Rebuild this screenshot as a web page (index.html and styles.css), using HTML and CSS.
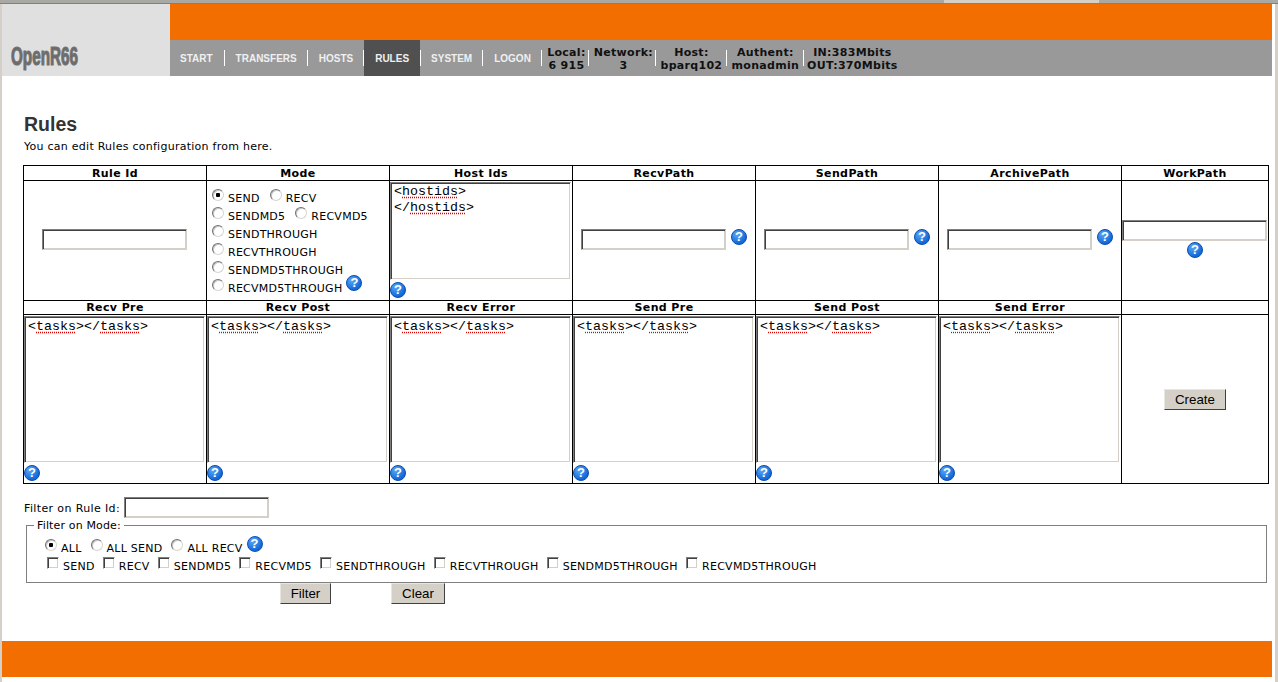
FILE: index.html
```html
<!DOCTYPE html>
<html lang="en">
<head>
    <meta charset="UTF-8">
    <meta name="viewport" content="width=device-width, initial-scale=1.0">
    <title>OpenR66 Rules</title>
    <link rel="stylesheet" href="styles.css">
</head>
<body>
<div class="window-top"><span class="tab-light"></span></div>
<div class="page">
    <header class="header">
        <div class="logo"><span class="logo-text">OpenR66</span></div>
        <div class="header-right">
            <div class="orange-bar"></div>
            <nav class="nav">
                <a class="nav-link first" href="#">START</a>
                <a class="nav-link" href="#">TRANSFERS</a>
                <a class="nav-link" href="#">HOSTS</a>
                <a class="nav-link active" href="#">RULES</a>
                <a class="nav-link" href="#">SYSTEM</a>
                <a class="nav-link" href="#">LOGON</a>
                <div class="stat stat-local">Local:<br>6 915</div>
                <div class="stat stat-network">Network:<br>3</div>
                <div class="stat stat-host">Host:<br>bparq102</div>
                <div class="stat stat-auth">Authent:<br>monadmin</div>
                <div class="stat stat-band">IN:383Mbits<br>OUT:370Mbits</div>
            </nav>
        </div>
    </header>

    <main class="content">
        <h1>Rules</h1>
        <p class="intro">You can edit Rules configuration from here.</p>

        <table class="rules">
            <colgroup>
                <col class="col"><col class="col"><col class="col"><col class="col"><col class="col"><col class="col"><col class="col-last">
            </colgroup>
            <tr class="head-row head-first">
                <th>Rule Id</th><th>Mode</th><th>Host Ids</th><th>RecvPath</th><th>SendPath</th><th>ArchivePath</th><th>WorkPath</th>
            </tr>
            <tr class="path-row">
                <td><input class="field field-left" type="text"></td>
                <td class="mode-cell">
                    <div class="opt-line"><label class="opt"><input type="radio" name="mode" checked>SEND</label><label class="opt"><input type="radio" name="mode">RECV</label></div>
                    <div class="opt-line"><label class="opt"><input type="radio" name="mode">SENDMD5</label><label class="opt"><input type="radio" name="mode">RECVMD5</label></div>
                    <div class="opt-line"><label class="opt"><input type="radio" name="mode">SENDTHROUGH</label></div>
                    <div class="opt-line"><label class="opt"><input type="radio" name="mode">RECVTHROUGH</label></div>
                    <div class="opt-line"><label class="opt"><input type="radio" name="mode">SENDMD5THROUGH</label></div>
                    <div class="opt-line"><label class="opt"><input type="radio" name="mode">RECVMD5THROUGH</label><span class="help help-raised">?</span></div>
                </td>
                <td class="box-cell">
                    <div class="textbox hosts">&lt;<span class="spell">hostids</span>&gt;<br>&lt;/<span class="spell">hostids</span>&gt;</div>
                    <span class="help">?</span>
                </td>
                <td><input class="field" type="text"><span class="help help-side">?</span></td>
                <td><input class="field" type="text"><span class="help help-side">?</span></td>
                <td><input class="field" type="text"><span class="help help-side">?</span></td>
                <td class="work-cell"><input class="field" type="text"><span class="help help-under">?</span></td>
            </tr>
            <tr class="head-row head-second">
                <th>Recv Pre</th><th>Recv Post</th><th>Recv Error</th><th>Send Pre</th><th>Send Post</th><th>Send Error</th><th></th>
            </tr>
            <tr class="task-row">
                <td class="box-cell"><div class="textbox tasks">&lt;<span class="spell">tasks</span>&gt;&lt;/<span class="spell">tasks</span>&gt;</div><span class="help">?</span></td>
                <td class="box-cell"><div class="textbox tasks">&lt;<span class="spell">tasks</span>&gt;&lt;/<span class="spell">tasks</span>&gt;</div><span class="help">?</span></td>
                <td class="box-cell"><div class="textbox tasks">&lt;<span class="spell">tasks</span>&gt;&lt;/<span class="spell">tasks</span>&gt;</div><span class="help">?</span></td>
                <td class="box-cell"><div class="textbox tasks">&lt;<span class="spell">tasks</span>&gt;&lt;/<span class="spell">tasks</span>&gt;</div><span class="help">?</span></td>
                <td class="box-cell"><div class="textbox tasks">&lt;<span class="spell">tasks</span>&gt;&lt;/<span class="spell">tasks</span>&gt;</div><span class="help">?</span></td>
                <td class="box-cell"><div class="textbox tasks">&lt;<span class="spell">tasks</span>&gt;&lt;/<span class="spell">tasks</span>&gt;</div><span class="help">?</span></td>
                <td><button class="btn btn-create" type="button">Create</button></td>
            </tr>
        </table>

        <div class="filter-id">
            <label for="filter-rule">Filter on Rule Id:</label>
            <input class="field" id="filter-rule" type="text">
        </div>

        <fieldset class="filter-mode">
            <legend>Filter on Mode:</legend>
            <div class="filter-line radios">
                <label class="opt"><input type="radio" name="filter" checked>ALL</label>
                <label class="opt"><input type="radio" name="filter">ALL SEND</label>
                <label class="opt"><input type="radio" name="filter">ALL RECV</label>
                <span class="help">?</span>
            </div>
            <div class="filter-line checks">
                <label class="opt"><input type="checkbox">SEND</label>
                <label class="opt"><input type="checkbox">RECV</label>
                <label class="opt"><input type="checkbox">SENDMD5</label>
                <label class="opt"><input type="checkbox">RECVMD5</label>
                <label class="opt"><input type="checkbox">SENDTHROUGH</label>
                <label class="opt"><input type="checkbox">RECVTHROUGH</label>
                <label class="opt"><input type="checkbox">SENDMD5THROUGH</label>
                <label class="opt"><input type="checkbox">RECVMD5THROUGH</label>
            </div>
        </fieldset>

        <div class="filter-buttons">
            <button class="btn btn-filter" type="button">Filter</button>
            <button class="btn btn-clear" type="button">Clear</button>
        </div>
    </main>

    <footer class="footer"></footer>
</div>
</body>
</html>
```
FILE: styles.css
```css
html, body {
    margin: 0;
    height: 682px;
    overflow: hidden;
}

body {
    background-color: #d4d0c8;
    font-family: "DejaVu Sans", Verdana, sans-serif;
    font-size: 11px;
    color: #000;
}

.window-top {
    height: 3px;
    background-color: #a8a8a4;
    border-bottom: 1px solid #808080;
    display: flex;
    justify-content: flex-end;
}

.tab-light {
    width: 155px;
    margin-right: 179px;
    background-color: #d4d0c8;
}

.page {
    margin: 0 3px 0 2px;
    height: 678px;
    background-color: #fff;
    padding-right: 2px;
    border-right: 1px solid #fff;
}

/* header */
.header {
    display: flex;
    height: 72px;
}

.logo {
    width: 168px;
    background-color: #e0e0e0;
    display: flex;
    align-items: flex-end;
    padding-left: 9px;
    box-sizing: border-box;
}

.logo-text {
    display: block;
    font-family: "Liberation Sans", Arial, sans-serif;
    font-weight: bold;
    font-size: 25px;
    line-height: 24px;
    margin-bottom: 8px;
    color: #6b6b6b;
    -webkit-text-stroke: 1.2px #727272;
    transform: scaleX(0.61);
    transform-origin: left center;
}

.header-right {
    flex: 1;
    display: flex;
    flex-direction: column;
}

.orange-bar {
    height: 36px;
    background-color: #f26e00;
}

.nav {
    height: 36px;
    background-color: #999;
    display: flex;
    align-items: stretch;
}

.nav-link {
    display: flex;
    align-items: center;
    padding: 0 11px;
    position: relative;
    font-family: "Liberation Sans", Arial, sans-serif;
    font-weight: bold;
    font-size: 10px;
    color: #f0f0f0;
    text-decoration: none;
}

.nav-link.first {
    padding: 0 12px 0 10px;
}

.nav-link::after,
.stat::after {
    content: "";
    position: absolute;
    right: 0;
    top: 10px;
    height: 16px;
    width: 1px;
    background-color: #fff;
}

.nav-link.active {
    background-color: #505050;
}

.nav-link.active::after {
    right: -1px;
}

.stat {
    position: relative;
    box-sizing: border-box;
    padding-top: 6px;
    text-align: center;
    font-weight: bold;
    font-size: 11px;
    line-height: 13px;
    letter-spacing: 0.3px;
    color: #111;
    white-space: nowrap;
}

.stat-local { width: 47px; padding-left: 2px; }
.stat-network { width: 67px; padding-left: 2px; }
.stat-host { width: 71px; }
.stat-auth { width: 77px; }
.stat-band { width: 97px; }
.stat-band::after { display: none; }

/* content */
.content {
    padding: 36px 0 0 21px;
    height: 565px;
    box-sizing: border-box;
}

h1 {
    margin: 0;
    font-family: "Liberation Sans", Arial, sans-serif;
    font-size: 19.5px;
    line-height: 24px;
    color: #333;
    padding-left: 1px;
}

.intro {
    margin: 4px 0 0 1px;
    line-height: 14px;
    height: 25px;
    letter-spacing: 0.26px;
}

.rules {
    width: 1246px;
    table-layout: fixed;
    border-collapse: collapse;
}

.col { width: 183px; }
.col-last { width: 147px; }

.rules th,
.rules td {
    border: 1px solid #000;
    padding: 0;
}

.head-row { height: 14px; }
.head-first { height: 15px; }

.rules th {
    font-size: 11px;
    line-height: 13px;
    letter-spacing: 0.4px;
    text-align: center;
}

.rules .head-second th {
    padding-top: 1px;
    line-height: 12px;
}

.path-row { height: 120px; }
.task-row { height: 169px; }

.rules td {
    text-align: center;
    vertical-align: middle;
}

.path-row td {
    padding-bottom: 2px;
}

.rules td.mode-cell {
    text-align: left;
    padding: 8px 0 0 5px;
    vertical-align: top;
}

.rules td.box-cell {
    text-align: left;
    vertical-align: top;
    padding: 0;
}

.rules td.work-cell {
    text-align: left;
    padding-bottom: 3px;
}

.opt-line {
    height: 18px;
    white-space: nowrap;
}

.opt {
    letter-spacing: 0.25px;
}

.opt input {
    appearance: none;
    margin: 0 4px 0 0;
    background-color: #fff;
    vertical-align: 1px;
    box-sizing: border-box;
}

.opt input[type="radio"] {
    width: 12px;
    height: 12px;
    border-radius: 50%;
    border: 1px solid;
    border-color: #707070 #d8d5ce #d8d5ce #707070;
    box-shadow: inset 1px 1px 0 #c8c8c8;
}

.opt input[type="radio"]:checked {
    background: radial-gradient(circle, #000 0, #000 2px, #fff 2.5px);
}

.opt input[type="checkbox"] {
    width: 12px;
    height: 12px;
    border: 1px solid;
    border-color: #808080 #fff #fff #808080;
    box-shadow: inset 1px 1px 0 #404040, inset -1px -1px 0 #d4d0c8;
}

.opt-line .opt + .opt {
    margin-left: 10px;
}

.field {
    box-sizing: border-box;
    width: 145px;
    height: 21px;
    margin: 0;
    padding: 0 2px;
    background-color: #fff;
    border: 1px solid;
    border-color: #808080 #d4d0c8 #d4d0c8 #808080;
    box-shadow: inset 1px 1px 0 #404040, inset -1px -1px 0 #d4d0c8;
    border-radius: 0;
    outline: none;
    vertical-align: middle;
}

.field-left {
    margin-left: -2px;
}

.textbox {
    box-sizing: border-box;
    width: 181px;
    margin: 1px 0 2px 0;
    padding: 1px 3px;
    border: 1px solid;
    border-color: #808080 #fff #fff #808080;
    box-shadow: inset 1px 1px 0 #404040, inset -1px -1px 0 #d4d0c8;
    font-family: "Liberation Mono", "Courier New", monospace;
    font-size: 13.33px;
    line-height: 16px;
    overflow: hidden;
}

.textbox.hosts { height: 98px; }
.textbox.tasks { height: 147px; padding-top: 2px; }

.spell {
    text-decoration: underline dotted #e00000;
    text-underline-offset: 2px;
}

.help {
    display: inline-block;
    box-sizing: border-box;
    width: 16px;
    height: 16px;
    border-radius: 50%;
    border: 1px solid #0c4fb0;
    background: radial-gradient(circle at 35% 30%, #5aa8f5, #1268d8 70%);
    color: #fff;
    font-family: "Liberation Sans", Arial, sans-serif;
    font-weight: bold;
    font-size: 13px;
    line-height: 14px;
    text-align: center;
    vertical-align: top;
    letter-spacing: 0;
}

.help-raised {
    margin-left: 4px;
    position: relative;
    top: -4px;
}

.help-side {
    margin-left: 5px;
    vertical-align: middle;
    position: relative;
    top: -3px;
}

.help-under {
    display: block;
    margin: 1px auto 0;
}

/* filter */
.filter-id {
    margin-top: 13px;
    margin-left: 1px;
    height: 21px;
}

.filter-id label {
    position: relative;
    top: 1px;
    vertical-align: middle;
    letter-spacing: 0.37px;
    margin-right: 1px;
}

.filter-mode {
    margin: 1px 0 0 3px;
    padding: 0 0 0 18px;
    width: 1241px;
    height: 64px;
    box-sizing: border-box;
    border: 1px solid #808080;
}

.filter-mode legend {
    padding: 0 3px;
    margin-left: -11px;
    letter-spacing: 0.15px;
}

.filter-line {
    display: flex;
    align-items: flex-start;
    height: 18px;
    white-space: nowrap;
}

.filter-line.radios {
    gap: 9px;
    margin-top: 7px;
}

.filter-line.radios .help {
    margin: -3px 0 0 -5px;
}

.filter-line.checks {
    gap: 8.2px;
    padding-left: 2px;
}

.filter-buttons {
    display: flex;
    gap: 60px;
    padding-left: 257px;
    margin-top: 0;
}

.btn {
    box-sizing: border-box;
    height: 21px;
    padding: 0;
    background-color: #d4d0c8;
    border: 1px solid;
    border-color: #e8e6e0 #404040 #404040 #e8e6e0;
    border-radius: 0;
    font-family: "Liberation Sans", Arial, sans-serif;
    font-size: 13.33px;
    color: #000;
}

.btn-create { width: 62px; }
.btn-filter { width: 51px; }
.btn-clear { width: 54px; }

.footer {
    height: 36px;
    background-color: #f26e00;
}
```
